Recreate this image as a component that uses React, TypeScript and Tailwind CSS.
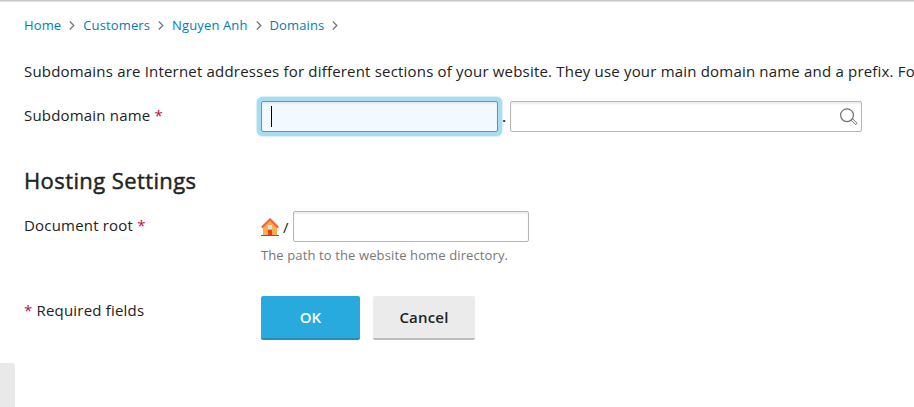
import React from "react";

const crumbs = ["Home", "Customers", "Nguyen Anh", "Domains"];

function Chevron() {
  return (
    <svg width="6" height="9" viewBox="0 0 6 9" className="shrink-0" fill="none" stroke="#777" strokeWidth="1.3">
      <path d="M.8.5 4.8 4.5 .8 8.5" />
    </svg>
  );
}

function SearchIcon() {
  return (
    <svg width="18" height="18" viewBox="0 0 18 18" fill="none" stroke="#737373">
      <circle cx="7" cy="7.2" r="6.4" strokeWidth="1.2" />
      <path d="m11.2 12 1.4-1.2 4 4c.6 1-.7 2.1-1.6 1.4l-4-4Z" />
    </svg>
  );
}

function HouseIcon() {
  return (
    <svg width="18" height="18" viewBox="0 0 18 18" className="shrink-0">
      <path d="M2 9 9 2l7 7v8H2Z" fill="#ffad55" />
      <path d="M.8 9.5 9 1.4l8.2 8.1" fill="none" stroke="#ff5c30" strokeWidth="2.1" />
      <path d="M7 7h4v4H7Z" fill="#c9ebf0" />
      <path d="M7 12h4v5H7Z" fill="#f23c0a" />
      <path d="M0 17h18v1H0Z" fill="#a4501c" />
    </svg>
  );
}

function Required() {
  return <span className="text-[#c00d3d]">*</span>;
}

export default function App() {
  return (
    <main className="relative h-[407px] w-[914px] overflow-hidden border-t border-[#c8c8c8] bg-white pl-6 font-['Open_Sans',sans-serif] text-[15px] leading-5 tracking-[0.19px] text-[#222] shadow-[inset_0_1px_0_#e0e0e0]">
      <nav className="mt-[14px] flex h-5 items-center text-[13px] tracking-[0.13px] text-[#0080b0]">
        {crumbs.map((c) => (
          <span key={c} className="mr-2 flex items-center gap-2">
            <a>{c}</a>
            <Chevron />
          </span>
        ))}
      </nav>
      <p className="mt-[26px] whitespace-nowrap">
        Subdomains are Internet addresses for different sections of your website. They use your main domain name and a prefix. Fo
      </p>
      <div className="mt-5 flex">
        <label className="w-[237px] pt-1">Subdomain name <Required /></label>
        <div className="flex h-[31px] w-[237px] items-center rounded-[2px] border border-[#28aade] bg-[#f2f9ff] pl-[9px] shadow-[0_0_0_4px_#a9dcf0,0_0_1px_5px_#d8f0f8,inset_0_2px_2px_#e4ebef]">
          <span className="h-[21px] w-px bg-black" />
        </div>
        <span className="w-3 pt-[5px] pl-1 font-semibold">.</span>
        <div className="flex h-[31px] w-[352px] items-center justify-end rounded-[2px] border border-[#b5b5b5] pr-[3px] shadow-[inset_0_2px_2px_#eee]">
          <SearchIcon />
        </div>
      </div>
      <h2 className="mt-[33px] text-[22px] leading-[30px] tracking-[0.4px] [-webkit-text-stroke:0.45px_#222]">Hosting Settings</h2>
      <div className="mt-4 flex">
        <label className="w-[237px] pt-1">Document root <Required /></label>
        <div>
          <div className="flex h-[31px] items-center">
            <HouseIcon />
            <span className="w-[14px] pt-px pl-1">/</span>
            <div className="h-[31px] w-[236px] rounded-[2px] border border-[#b5b5b5] shadow-[inset_0_2px_2px_#eee]" />
          </div>
          <p className="mt-1 text-[13px] leading-[18px] tracking-[0.12px] text-[#777]">The path to the website home directory.</p>
        </div>
      </div>
      <div className="mt-8 flex">
        <p className="w-[237px] pt-1"><Required /> Required fields</p>
        <button className="mr-[13px] h-11 w-[99px] rounded-[2px] border-b-2 border-[#228fbd] bg-[#28aade] font-semibold tracking-normal text-white">OK</button>
        <button className="h-11 w-[102px] rounded-[2px] border-b-2 border-[#bcbcbc] bg-[#ebebeb] font-semibold">Cancel</button>
      </div>
      <div className="mt-[23px] -ml-6 h-12 w-[15px] rounded-tr-[4px] bg-[#e9e9e9]" />
    </main>
  );
}
